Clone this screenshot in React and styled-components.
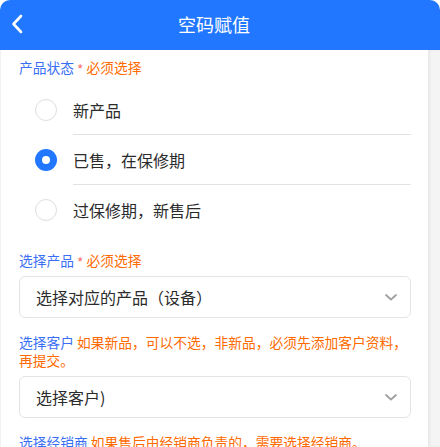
import React, { useState } from "react";
import styled, { createGlobalStyle } from "styled-components";

const GlobalStyle = createGlobalStyle`
  html, body {
    margin: 0;
    padding: 0;
    height: 100%;
    overflow: hidden;
    background: #ffffff;
  }
  body {
    font-family: "Noto Sans CJK SC", "Noto Sans", sans-serif;
  }
`;

const statusOptions = ["新产品", "已售，在保修期", "过保修期，新售后"];

const Page = styled.div`
  width: 440px;
  height: 447px;
  display: flex;
  flex-direction: column;
`;

const Header = styled.div`
  height: 50px;
  flex-shrink: 0;
  background: #2177ff;
  border-radius: 10px 10px 0 0;
  display: flex;
  align-items: center;
  justify-content: center;
  padding-right: 12px;
  position: relative;
`;

const BackButton = styled.div`
  position: absolute;
  left: 9px;
  top: 12px;
  width: 16px;
  height: 24px;
  display: flex;
  align-items: center;
  justify-content: center;
`;

const Title = styled.div`
  color: #ffffff;
  font-size: 18px;
  line-height: 24px;
  margin-top: -2px;
`;

const Body = styled.div`
  flex: 1;
  display: flex;
  min-height: 0;
`;

const Content = styled.div`
  flex: 1;
  padding: 8px 17px 0 18px;
  border-left: 1px solid #f2f2f2;
  box-sizing: border-box;
  overflow: hidden;
`;

const Gutter = styled.div`
  width: 12px;
  flex-shrink: 0;
  background: #f4f4f4;
  box-shadow: inset 2px 0 3px rgba(0, 0, 0, 0.05);
`;

const Label = styled.div`
  font-size: 13.75px;
  line-height: 18px;
  color: #ff6a00;
  margin-bottom: 7px;
  margin-right: -8px;
`;

const LabelName = styled.span`
  color: #3a6ff5;
`;

const Star = styled.span`
  color: #f77272;
  position: relative;
  top: 2px;
`;

const RadioGroup = styled.div`
  padding-top: 2px;
  margin-bottom: 16px;
`;

const RadioItem = styled.div`
  display: flex;
  align-items: stretch;
  height: 50px;
  padding-left: 16px;
  cursor: pointer;
`;

const RadioMark = styled.div`
  width: 22px;
  height: 22px;
  box-sizing: border-box;
  border-radius: 50%;
  align-self: center;
  margin-right: 16px;
  flex-shrink: 0;
  display: flex;
  align-items: center;
  justify-content: center;
  border: ${(p) => (p.$checked ? "none" : "1px solid #dedede")};
  background: ${(p) => (p.$checked ? "#2177ff" : "#ffffff")};

  &::after {
    content: "";
    display: ${(p) => (p.$checked ? "block" : "none")};
    width: 8px;
    height: 8px;
    border-radius: 50%;
    background: #ffffff;
  }
`;

const RadioText = styled.div`
  flex: 1;
  display: flex;
  align-items: center;
  font-size: 16px;
  color: #2b2b2b;
  padding-bottom: 1px;
  border-top: ${(p) => (p.$first ? "none" : "1px solid #e2e2e2")};
  margin-top: ${(p) => (p.$first ? "0" : "-1px")};
`;

const Select = styled.div`
  height: 42px;
  box-sizing: border-box;
  border: 1px solid #e4e4e4;
  border-radius: 6px;
  display: flex;
  align-items: center;
  justify-content: space-between;
  padding: 0 12px 0 16px;
  margin-bottom: 15px;
  font-size: 16px;
  color: #2b2b2b;
`;

const Chevron = () => (
  <svg width="14" height="9" viewBox="0 0 14 9">
    <polyline
      points="2,2 7,6.5 12,2"
      fill="none"
      stroke="#a0a0a0"
      strokeWidth="1.8"
      strokeLinecap="round"
      strokeLinejoin="round"
    />
  </svg>
);

const App = () => {
  const [status, setStatus] = useState(1);

  return (
    <Page>
      <GlobalStyle />
      <Header>
        <BackButton>
          <svg width="12" height="20" viewBox="0 0 12 20">
            <polyline
              points="10,2 2.5,10 10,18"
              fill="none"
              stroke="#ffffff"
              strokeWidth="2.6"
              strokeLinecap="round"
              strokeLinejoin="round"
            />
          </svg>
        </BackButton>
        <Title>空码赋值</Title>
      </Header>
      <Body>
        <Content>
          <Label>
            <LabelName>产品状态</LabelName> <Star>*</Star> 必须选择
          </Label>
          <RadioGroup>
            {statusOptions.map((opt, i) => (
              <RadioItem key={opt} onClick={() => setStatus(i)}>
                <RadioMark $checked={status === i} />
                <RadioText $first={i === 0}>{opt}</RadioText>
              </RadioItem>
            ))}
          </RadioGroup>

          <Label>
            <LabelName>选择产品</LabelName> <Star>*</Star> 必须选择
          </Label>
          <Select>
            <span>选择对应的产品（设备）</span>
            <Chevron />
          </Select>

          <Label>
            <LabelName>选择客户</LabelName> 如果新品，可以不选，非新品，必须先添加客户资料，再提交。
          </Label>
          <Select>
            <span>选择客户)</span>
            <Chevron />
          </Select>

          <Label>
            <LabelName>选择经销商</LabelName> 如果售后由经销商负责的，需要选择经销商。
          </Label>
        </Content>
        <Gutter />
      </Body>
    </Page>
  );
};

export default App;
